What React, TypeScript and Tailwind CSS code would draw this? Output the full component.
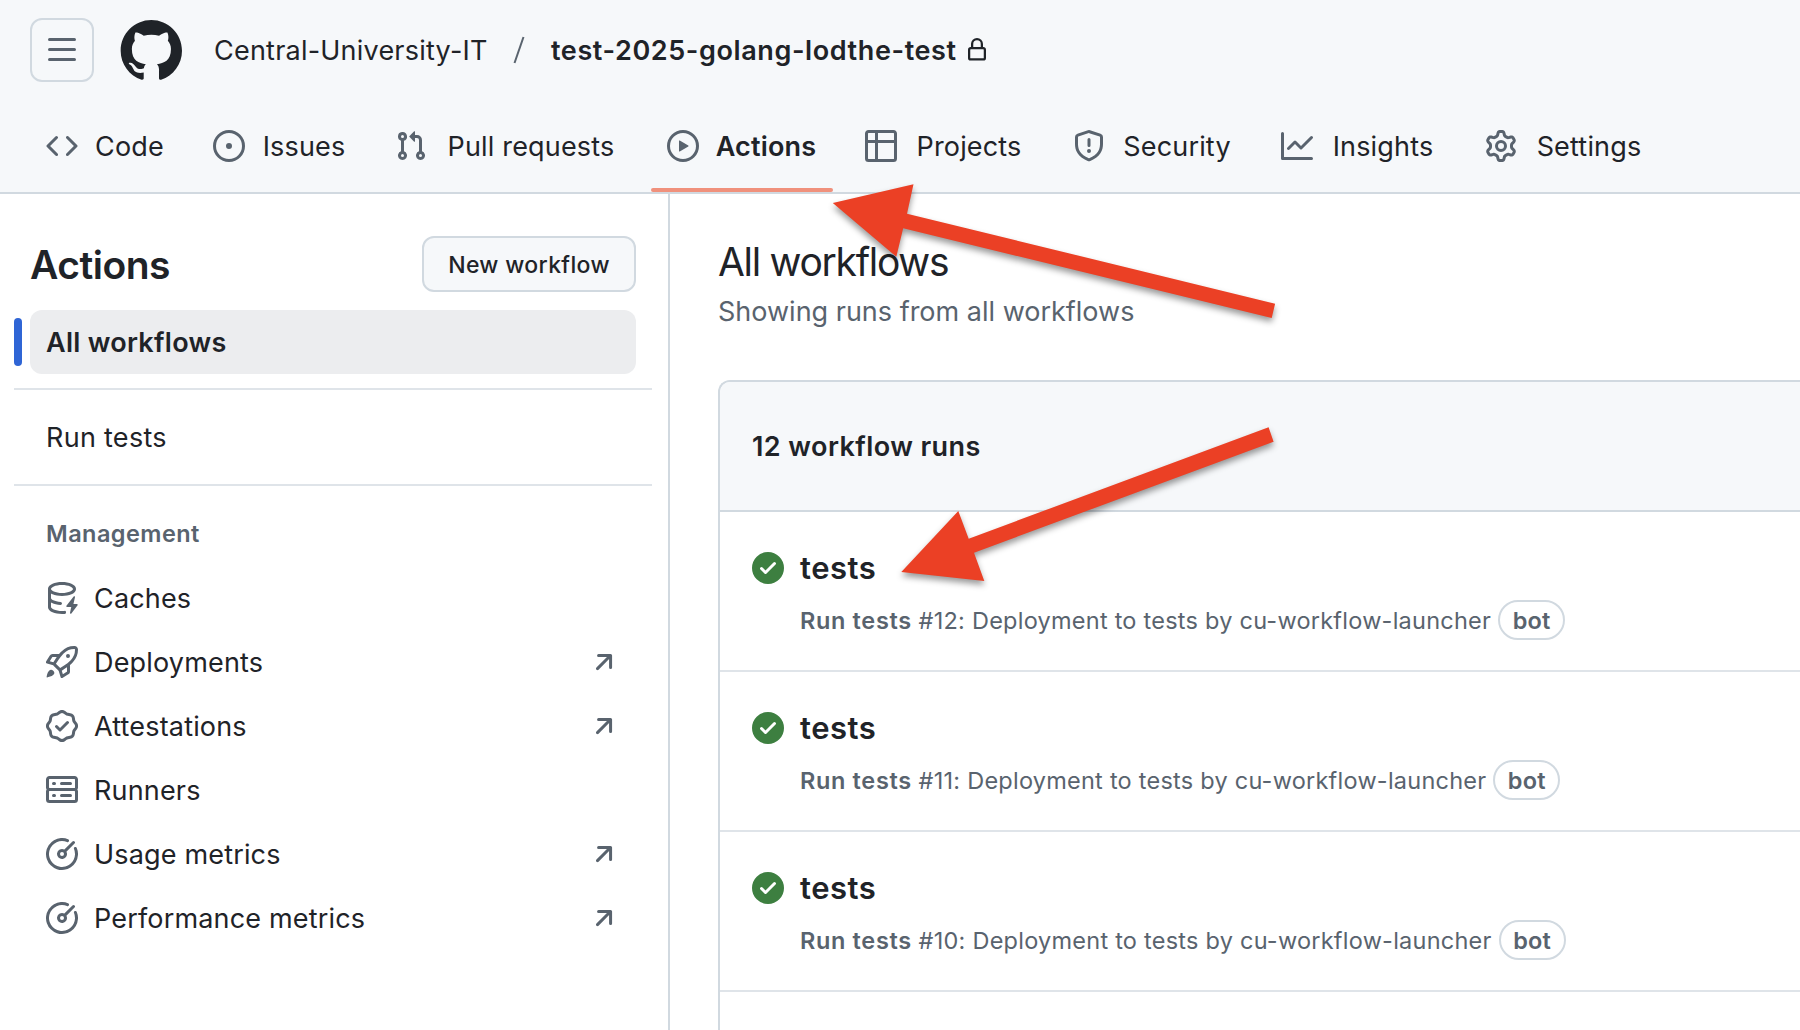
import React from "react";

const ICONS = {
  bars: "M1 2.75A.75.75 0 0 1 1.75 2h12.5a.75.75 0 0 1 0 1.5H1.75A.75.75 0 0 1 1 2.75Zm0 5A.75.75 0 0 1 1.75 7h12.5a.75.75 0 0 1 0 1.5H1.75A.75.75 0 0 1 1 7.75ZM1.75 12h12.5a.75.75 0 0 1 0 1.5H1.75a.75.75 0 0 1 0-1.5Z",
  lock: "M4 4a4 4 0 0 1 8 0v2h.25c.966 0 1.75.784 1.75 1.75v5.5A1.75 1.75 0 0 1 12.25 15h-8.5A1.75 1.75 0 0 1 2 13.25v-5.5C2 6.784 2.784 6 3.75 6H4Zm8.25 3.5h-8.5a.25.25 0 0 0-.25.25v5.5c0 .138.112.25.25.25h8.5a.25.25 0 0 0 .25-.25v-5.5a.25.25 0 0 0-.25-.25ZM10.5 6V4a2.5 2.5 0 1 0-5 0v2Z",
  code: "m11.28 3.22 4.25 4.25a.75.75 0 0 1 0 1.06l-4.25 4.25a.749.749 0 0 1-1.275-.326.749.749 0 0 1 .215-.734L13.94 8l-3.72-3.72a.749.749 0 0 1 .326-1.275.749.749 0 0 1 .734.215Zm-6.56 0a.751.751 0 0 1 1.042.018.751.751 0 0 1 .018 1.042L2.06 8l3.72 3.72a.749.749 0 0 1-.326 1.275.749.749 0 0 1-.734-.215L.47 8.53a.75.75 0 0 1 0-1.06Z",
  issue: "M8 9.5a1.5 1.5 0 1 0 0-3 1.5 1.5 0 0 0 0 3ZM8 0a8 8 0 1 1 0 16A8 8 0 0 1 8 0ZM1.5 8a6.5 6.5 0 1 0 13 0 6.5 6.5 0 0 0-13 0Z",
  pull: "M1.5 3.25a2.25 2.25 0 1 1 3 2.122v5.256a2.251 2.251 0 1 1-1.5 0V5.372A2.25 2.25 0 0 1 1.5 3.25Zm5.677-.177L9.573.677A.25.25 0 0 1 10 .854V2.5h1A2.5 2.5 0 0 1 13.5 5v5.628a2.251 2.251 0 1 1-1.5 0V5a1 1 0 0 0-1-1h-1v1.646a.25.25 0 0 1-.427.177L7.177 3.427a.25.25 0 0 1 0-.354ZM3.75 2.5a.75.75 0 1 0 0 1.5.75.75 0 0 0 0-1.5Zm0 9.5a.75.75 0 1 0 0 1.5.75.75 0 0 0 0-1.5Zm8.25.75a.75.75 0 1 0 1.5 0 .75.75 0 0 0-1.5 0Z",
  play: "M8 0a8 8 0 1 1 0 16A8 8 0 0 1 8 0ZM1.5 8a6.5 6.5 0 1 0 13 0 6.5 6.5 0 0 0-13 0Zm4.879-2.773 4.264 2.559a.25.25 0 0 1 0 .428l-4.264 2.559A.25.25 0 0 1 6 10.559V5.442a.25.25 0 0 1 .379-.215Z",
  table: "M0 1.75C0 .784.784 0 1.75 0h12.5C15.216 0 16 .784 16 1.75v12.5A1.75 1.75 0 0 1 14.25 16H1.75A1.75 1.75 0 0 1 0 14.25ZM6.5 6.5v8h7.75a.25.25 0 0 0 .25-.25V6.5Zm8-1.5V1.75a.25.25 0 0 0-.25-.25H6.5V5Zm-13 1.5v7.75c0 .138.112.25.25.25H5v-8ZM5 5V1.5H1.75a.25.25 0 0 0-.25.25V5Z",
  shield: "M7.467.133a1.748 1.748 0 0 1 1.066 0l5.25 1.68A1.75 1.75 0 0 1 15 3.48V7c0 1.566-.32 3.182-1.303 4.682-.983 1.498-2.585 2.813-5.032 3.855a1.697 1.697 0 0 1-1.33 0c-2.447-1.042-4.049-2.357-5.032-3.855C1.32 10.182 1 8.566 1 7V3.48a1.75 1.75 0 0 1 1.217-1.667Zm.61 1.429a.25.25 0 0 0-.153 0l-5.25 1.68a.25.25 0 0 0-.174.238V7c0 1.358.275 2.666 1.057 3.86.784 1.194 2.121 2.34 4.366 3.297a.196.196 0 0 0 .154 0c2.245-.956 3.582-2.104 4.366-3.298C13.225 9.666 13.5 8.36 13.5 7V3.48a.251.251 0 0 0-.174-.237l-5.25-1.68ZM8.75 4.75v3a.75.75 0 0 1-1.5 0v-3a.75.75 0 0 1 1.5 0ZM9 10.5a1 1 0 1 1-2 0 1 1 0 0 1 2 0Z",
  graph: "M1.5 1.75V13.5h13.75a.75.75 0 0 1 0 1.5H.75a.75.75 0 0 1-.75-.75V1.75a.75.75 0 0 1 1.5 0Zm14.28 2.53-5.25 5.25a.75.75 0 0 1-1.06 0L7 7.06 4.28 9.78a.751.751 0 0 1-1.042-.018.751.751 0 0 1-.018-1.042l3.25-3.25a.75.75 0 0 1 1.06 0L10 7.94l4.72-4.72a.751.751 0 0 1 1.042.018.751.751 0 0 1 .018 1.042Z",
  gear: "M8 0a8.2 8.2 0 0 1 .701.031C9.444.095 9.99.645 10.16 1.29l.288 1.107c.018.066.079.158.212.224.231.114.454.243.668.386.123.082.233.09.299.071l1.103-.303c.644-.176 1.392.021 1.82.63.27.385.506.792.704 1.218.315.675.111 1.422-.364 1.891l-.814.806c-.049.048-.098.147-.088.294.016.257.016.515 0 .772-.01.147.038.246.088.294l.814.806c.475.469.679 1.216.364 1.891a7.977 7.977 0 0 1-.704 1.217c-.428.61-1.176.807-1.82.63l-1.102-.302c-.067-.019-.177-.011-.3.071a5.909 5.909 0 0 1-.668.386c-.133.066-.194.158-.211.224l-.29 1.106c-.168.646-.715 1.196-1.458 1.26a8.006 8.006 0 0 1-1.402 0c-.743-.064-1.289-.614-1.458-1.26l-.289-1.106c-.018-.066-.079-.158-.212-.224a5.738 5.738 0 0 1-.668-.386c-.123-.082-.233-.09-.299-.071l-1.103.303c-.644.176-1.392-.021-1.82-.63a8.12 8.12 0 0 1-.704-1.218c-.315-.675-.111-1.422.363-1.891l.815-.806c.05-.048.098-.147.088-.294a6.214 6.214 0 0 1 0-.772c.01-.147-.038-.246-.088-.294l-.815-.806C.635 6.045.431 5.298.746 4.623a7.92 7.92 0 0 1 .704-1.217c.428-.61 1.176-.807 1.82-.63l1.102.302c.067.019.177.011.3-.071.214-.143.437-.272.668-.386.133-.066.194-.158.211-.224l.29-1.106C6.009.645 6.556.095 7.299.03 7.53.01 7.764 0 8 0Zm-.571 1.525c-.036.003-.108.036-.137.146l-.289 1.105c-.147.561-.549.967-.998 1.189-.173.086-.34.183-.5.29-.417.278-.97.423-1.529.27l-1.103-.303c-.109-.03-.175.016-.195.045-.22.312-.412.644-.573.99-.014.031-.021.11.059.19l.815.806c.411.406.562.957.53 1.456a4.709 4.709 0 0 0 0 .582c.032.499-.119 1.05-.53 1.456l-.815.806c-.081.08-.073.159-.059.19.162.346.353.677.573.989.02.03.085.076.195.046l1.102-.303c.56-.153 1.113-.008 1.53.27.161.107.328.204.501.29.447.222.85.629.997 1.189l.289 1.105c.029.109.101.143.137.146a6.6 6.6 0 0 0 1.142 0c.036-.003.108-.036.137-.146l.289-1.105c.147-.561.549-.967.998-1.189.173-.086.34-.183.5-.29.417-.278.97-.423 1.529-.27l1.103.303c.109.029.175-.016.195-.045.22-.313.411-.644.573-.99.014-.031.021-.11-.059-.19l-.815-.806c-.411-.406-.562-.957-.53-1.456a4.709 4.709 0 0 0 0-.582c-.032-.499.119-1.05.53-1.456l.815-.806c.081-.08.073-.159.059-.19a6.464 6.464 0 0 0-.573-.989c-.02-.03-.085-.076-.195-.046l-1.102.303c-.56.153-1.113.008-1.53-.27a4.44 4.44 0 0 0-.501-.29c-.447-.222-.85-.629-.997-1.189l-.289-1.105c-.029-.11-.101-.143-.137-.146a6.6 6.6 0 0 0-1.142 0ZM11 8a3 3 0 1 1-6 0 3 3 0 0 1 6 0ZM9.5 8a1.5 1.5 0 1 0-3.001.001A1.5 1.5 0 0 0 9.5 8Z",
  cache: "M2.5 5.724V8c0 .248.238.7 1.169 1.159.874.43 2.144.745 3.62.822a.75.75 0 1 1-.078 1.498c-1.622-.085-3.102-.432-4.204-.975a5.565 5.565 0 0 1-.507-.28V12.5c0 .133.058.318.282.551.227.237.591.483 1.101.707 1.015.447 2.47.742 4.117.742.406 0 .802-.018 1.183-.052a.751.751 0 1 1 .134 1.494C8.89 15.98 8.45 16 8 16c-1.805 0-3.475-.32-4.721-.869-.623-.274-1.173-.619-1.579-1.041-.408-.425-.7-.964-.7-1.59v-9c0-.626.292-1.165.7-1.591.406-.42.956-.766 1.579-1.04C4.525.32 6.195 0 8 0c1.806 0 3.476.32 4.721.869.623.274 1.173.619 1.579 1.041.408.425.7.964.7 1.59 0 .626-.292 1.165-.7 1.591-.406.42-.956.766-1.578 1.04C11.475 6.68 9.805 7 8 7c-1.805 0-3.475-.32-4.721-.869a6.15 6.15 0 0 1-.779-.407Zm0-2.224c0 .133.058.318.282.551.227.237.591.483 1.101.707C4.898 5.205 6.353 5.5 8 5.5c1.646 0 3.101-.295 4.118-.742.508-.224.873-.471 1.1-.708.224-.232.282-.417.282-.55 0-.133-.058-.318-.282-.551-.227-.237-.591-.483-1.101-.707C11.102 1.795 9.647 1.5 8 1.5c-1.646 0-3.101.295-4.118.742-.508.224-.873.471-1.1.708-.224.232-.282.417-.282.55ZM14.49 7.582a.375.375 0 0 0-.66-.313l-3.625 4.625a.375.375 0 0 0 .295.606h2.127l-.619 2.922a.375.375 0 0 0 .666.304l3.125-4.125A.375.375 0 0 0 15.5 11h-1.778l.769-3.418Z",
  rocket: "M14.064 0h.186C15.216 0 16 .784 16 1.75v.186a8.752 8.752 0 0 1-2.564 6.186l-.458.459c-.314.314-.641.616-.979.904v3.207c0 .608-.315 1.172-.833 1.49l-2.774 1.707a.749.749 0 0 1-1.11-.418l-.954-3.102a1.214 1.214 0 0 1-.145-.125L3.754 9.816a1.218 1.218 0 0 1-.124-.145L.528 8.717a.749.749 0 0 1-.418-1.11l1.71-2.774A1.748 1.748 0 0 1 3.31 4h3.204c.288-.338.59-.665.904-.979l.459-.458A8.749 8.749 0 0 1 14.064 0ZM8.938 3.623h-.002l-.458.458c-.76.76-1.437 1.598-2.02 2.5l-1.5 2.317 2.143 2.143 2.317-1.5c.902-.583 1.74-1.26 2.499-2.02l.459-.458a7.25 7.25 0 0 0 2.123-5.127V1.75a.25.25 0 0 0-.25-.25h-.186a7.249 7.249 0 0 0-5.125 2.123ZM3.56 14.56c-.732.732-2.334 1.045-3.005 1.148a.234.234 0 0 1-.201-.064.234.234 0 0 1-.064-.201c.103-.671.416-2.273 1.15-3.003a1.502 1.502 0 1 1 2.12 2.12Zm6.94-3.935c-.088.06-.177.118-.266.175l-2.35 1.521.548 1.783 1.949-1.2a.25.25 0 0 0 .119-.213ZM3.678 8.116 5.2 5.766c.058-.09.117-.178.176-.266H3.309a.25.25 0 0 0-.213.119l-1.2 1.95ZM12 5a1 1 0 1 1-2 0 1 1 0 0 1 2 0Z",
  verified: "m9.585.52.929.68c.153.112.331.186.518.215l1.138.175a2.678 2.678 0 0 1 2.24 2.24l.174 1.139c.029.187.103.365.215.518l.68.928a2.677 2.677 0 0 1 0 3.17l-.68.928a1.174 1.174 0 0 0-.215.518l-.175 1.138a2.678 2.678 0 0 1-2.241 2.241l-1.138.175a1.17 1.17 0 0 0-.518.215l-.928.68a2.677 2.677 0 0 1-3.17 0l-.928-.68a1.174 1.174 0 0 0-.518-.215L3.83 14.41a2.678 2.678 0 0 1-2.24-2.24l-.175-1.138a1.17 1.17 0 0 0-.215-.518l-.68-.928a2.677 2.677 0 0 1 0-3.17l.68-.928c.112-.153.186-.331.215-.518l.175-1.14a2.678 2.678 0 0 1 2.24-2.24l1.139-.175c.187-.029.365-.103.518-.215l.928-.68a2.677 2.677 0 0 1 3.17 0ZM7.303 1.728l-.927.68a2.67 2.67 0 0 1-1.18.489l-1.137.174a1.179 1.179 0 0 0-.987.987l-.174 1.136a2.677 2.677 0 0 1-.489 1.18l-.68.928a1.18 1.18 0 0 0 0 1.394l.68.927c.256.348.424.753.489 1.18l.174 1.137c.078.509.478.909.987.987l1.136.174a2.67 2.67 0 0 1 1.18.489l.928.68c.414.305.979.305 1.394 0l.927-.68a2.67 2.67 0 0 1 1.18-.489l1.137-.174a1.18 1.18 0 0 0 .987-.987l.174-1.136a2.67 2.67 0 0 1 .489-1.18l.68-.928a1.176 1.176 0 0 0 0-1.394l-.68-.927a2.686 2.686 0 0 1-.489-1.18l-.174-1.137a1.179 1.179 0 0 0-.987-.987l-1.136-.174a2.677 2.677 0 0 1-1.18-.489l-.928-.68a1.176 1.176 0 0 0-1.394 0ZM11.28 6.78l-3.75 3.75a.75.75 0 0 1-1.06 0L4.72 8.78a.751.751 0 0 1 .018-1.042.751.751 0 0 1 1.042-.018L7 8.94l3.22-3.22a.751.751 0 0 1 1.042.018.751.751 0 0 1 .018 1.042Z",
  server: "M1.75 1h12.5c.966 0 1.75.784 1.75 1.75v4c0 .372-.116.717-.314 1 .198.283.314.628.314 1v4a1.75 1.75 0 0 1-1.75 1.75H1.75A1.75 1.75 0 0 1 0 12.75v-4c0-.358.109-.707.314-1a1.739 1.739 0 0 1-.314-1v-4C0 1.784.784 1 1.75 1ZM1.5 2.75v4c0 .138.112.25.25.25h12.5a.25.25 0 0 0 .25-.25v-4a.25.25 0 0 0-.25-.25H1.75a.25.25 0 0 0-.25.25Zm.25 5.75a.25.25 0 0 0-.25.25v4c0 .138.112.25.25.25h12.5a.25.25 0 0 0 .25-.25v-4a.25.25 0 0 0-.25-.25ZM7 4.75A.75.75 0 0 1 7.75 4h4.5a.75.75 0 0 1 0 1.5h-4.5A.75.75 0 0 1 7 4.75ZM7.75 10h4.5a.75.75 0 0 1 0 1.5h-4.5a.75.75 0 0 1 0-1.5ZM3 4.75A.75.75 0 0 1 3.75 4h.5a.75.75 0 0 1 0 1.5h-.5A.75.75 0 0 1 3 4.75ZM3.75 10h.5a.75.75 0 0 1 0 1.5h-.5a.75.75 0 0 1 0-1.5Z",
  meter: "M8 1.5a6.5 6.5 0 1 0 6.016 4.035.75.75 0 0 1 1.388-.57 8 8 0 1 1-4.37-4.37.75.75 0 0 1-.569 1.389A6.473 6.473 0 0 0 8 1.5Zm6.28.22a.75.75 0 0 1 0 1.06l-4.063 4.064a2.5 2.5 0 1 1-1.06-1.06L13.22 1.72a.75.75 0 0 1 1.06 0ZM7 8a1 1 0 1 0 2 0 1 1 0 0 0-2 0Z",
  arrow: "M4.53 4.75A.75.75 0 0 1 5.28 4h6.01a.75.75 0 0 1 .75.75v6.01a.75.75 0 0 1-1.5 0v-4.2l-5.26 5.261a.749.749 0 0 1-1.275-.326.749.749 0 0 1 .215-.734L9.48 5.5h-4.2a.75.75 0 0 1-.75-.75Z",
  check: "M8 16A8 8 0 1 1 8 0a8 8 0 0 1 0 16Zm3.78-9.72a.751.751 0 0 0-.018-1.042.751.751 0 0 0-1.042-.018L6.75 9.19 5.28 7.72a.751.751 0 0 0-1.042.018.751.751 0 0 0-.018 1.042l2 2a.75.75 0 0 0 1.06 0Z",
};

const LOGO =
  "M12.5.75C6.146.75 1 5.896 1 12.25c0 5.089 3.292 9.387 7.863 10.91.575.101.79-.244.79-.546 0-.273-.014-1.178-.014-2.142-2.889.532-3.636-.704-3.866-1.35-.13-.331-.69-1.352-1.18-1.625-.402-.216-.977-.748-.014-.762.906-.014 1.553.834 1.769 1.179 1.035 1.74 2.688 1.25 3.349.948.1-.747.402-1.25.733-1.538-2.559-.287-5.232-1.279-5.232-5.678 0-1.25.445-2.285 1.178-3.09-.115-.288-.517-1.467.115-3.048 0 0 .963-.302 3.163 1.179.92-.259 1.897-.388 2.875-.388.977 0 1.955.13 2.875.388 2.2-1.495 3.162-1.179 3.162-1.179.633 1.581.23 2.76.115 3.048.733.805 1.179 1.825 1.179 3.09 0 4.413-2.688 5.39-5.247 5.678.417.36.776 1.05.776 2.128 0 1.538-.014 2.774-.014 3.162 0 .302.216.662.79.547C20.709 21.637 24 17.324 24 12.25 24 5.896 18.854.75 12.5.75Z";

type IconName = keyof typeof ICONS;

function Icon({ name, className = "size-8 text-[#59636e]" }: { name: IconName; className?: string }) {
  return (
    <svg viewBox="0 0 16 16" fill="currentColor" className={`shrink-0 ${className}`} aria-hidden="true">
      <path d={ICONS[name]} />
    </svg>
  );
}

const TABS: { icon: IconName; label: string; width: string; active?: boolean }[] = [
  { icon: "code", label: "Code", width: "w-[71px]" },
  { icon: "issue", label: "Issues", width: "w-[86px]" },
  { icon: "pull", label: "Pull requests", width: "w-[176px]" },
  { icon: "play", label: "Actions", width: "w-[102px]", active: true },
  { icon: "table", label: "Projects", width: "w-[112px]" },
  { icon: "shield", label: "Security", width: "w-[112px]" },
  { icon: "graph", label: "Insights", width: "w-[108px]" },
  { icon: "gear", label: "Settings", width: "w-[112px]" },
];

const MANAGEMENT: { icon: IconName; label: string; external?: boolean }[] = [
  { icon: "cache", label: "Caches" },
  { icon: "rocket", label: "Deployments", external: true },
  { icon: "verified", label: "Attestations", external: true },
  { icon: "server", label: "Runners" },
  { icon: "meter", label: "Usage metrics", external: true },
  { icon: "meter", label: "Performance metrics", external: true },
];

const RUNS = [12, 11, 10];

function Header() {
  return (
    <header className="h-[194px] border-b-2 border-[#d1d9e0] bg-[#f6f8fa]">
      <div className="flex h-[100px] items-center pl-[30px]">
        <button className="flex size-16 items-center justify-center rounded-xl border-2 border-[#d1d9e0]">
          <Icon name="bars" />
        </button>
        <svg viewBox="0 0 24 24" fill="currentColor" className="ml-6 size-16 shrink-0" aria-hidden="true">
          <path d={LOGO} />
        </svg>
        <span className="ml-8 w-[274px] whitespace-nowrap pt-px tracking-[0.22px]">Central-University-IT</span>
        <svg viewBox="0 0 12 28" className="ml-[25px] h-7 w-3 text-[#59636e]" aria-hidden="true">
          <path d="M10.5 1 1.5 27" stroke="currentColor" strokeWidth="2" />
        </svg>
        <span className="ml-[26px] w-[414px] whitespace-nowrap pt-px font-semibold tracking-[0.6px]">
          test-2025-golang-lodthe-test
        </span>
        <Icon name="lock" className="size-6" />
      </div>
      <nav className="flex h-[92px] gap-4 pl-[30px]">
        {TABS.map((tab) => (
          <a key={tab.label} className="relative flex items-center gap-4 px-4">
            <Icon name={tab.icon} />
            <span
              className={`flex justify-center whitespace-nowrap pt-px ${tab.width} ${tab.active ? "font-semibold" : ""}`}
            >
              {tab.label}
            </span>
            {tab.active && <span className="absolute inset-x-0 bottom-0 h-1 rounded-sm bg-[#f0917c]" />}
          </a>
        ))}
      </nav>
    </header>
  );
}

function Sidebar() {
  return (
    <aside className="w-[670px] shrink-0 border-r-2 border-[#d1d9e0] pl-[14px] pr-4 pt-[42px]">
      <div className="flex items-center justify-between pl-4 pr-4">
        <h2 className="text-[39px] leading-[55px] font-semibold tracking-[-0.5px] pt-px">Actions</h2>
        <button className="h-14 w-[214px] whitespace-nowrap rounded-xl border-2 border-[#d1d9e0] bg-[#f6f8fa] pt-px text-[23px] font-medium tracking-[0.35px]">
          New workflow
        </button>
      </div>
      <div className="mt-[18px] flex items-center gap-2 pr-4">
        <span className="h-12 w-2 rounded bg-[#2f65d5]" />
        <a className="flex h-16 grow items-center rounded-xl bg-[#ecedef] pl-4 pt-px font-semibold tracking-[0.28px]">
          All workflows
        </a>
      </div>
      <div className="mt-[14px] flex h-[98px] items-center border-y-2 border-[#dfe4e9] pl-8 pt-px tracking-[0.28px]">
        Run tests
      </div>
      <h3 className="mt-[30px] pl-8 text-[23.5px] leading-9 font-semibold tracking-[0.45px] text-[#59636e]">
        Management
      </h3>
      <ul className="mt-[14px]">
        {MANAGEMENT.map((item) => (
          <li key={item.label} className="flex h-16 items-center gap-4 pl-8 pr-8">
            <Icon name={item.icon} />
            <span className="grow pt-px">{item.label}</span>
            {item.external && <Icon name="arrow" />}
          </li>
        ))}
      </ul>
    </aside>
  );
}

function RunRow({ number }: { number: number }) {
  return (
    <li className="flex h-40 gap-4 border-b-2 border-[#dfe4e9] pl-8 pt-10">
      <Icon name="check" className="size-8 text-[#3d7f40]" />
      <div className="text-[23.5px] text-[#59636e]">
        <h4 className="text-[31px] leading-8 font-semibold tracking-[0.5px] text-[#1f2328]">tests</h4>
        <p className="mt-4 flex h-10 items-center whitespace-nowrap tracking-[0.24px]">
          <span className="pt-px">
            <b className="font-semibold tracking-[0.65px]">Run tests</b> #{number}: Deployment to tests by
            cu-workflow-launcher
          </span>
          <span className="ml-[7px] flex h-10 w-[67px] items-center justify-center rounded-full border-2 border-[#d1d9e0] pt-px font-semibold">
            bot
          </span>
        </p>
      </div>
    </li>
  );
}

function Arrows() {
  return (
    <svg
      viewBox="0 0 1800 1030"
      className="pointer-events-none absolute left-0 top-0 h-[1030px] w-[1800px] drop-shadow-[0_4px_3px_rgba(0,0,0,0.4)]"
      fill="#eb4025"
      aria-hidden="true"
    >
      <path d="M832.8 203 913.5 184.3 907 213.7 1275.1 303.7 1271.7 318 903.2 228.3 896.3 256.7Z" />
      <path d="M901.3 572 958.3 511 968.7 538.7 1268.6 427.3 1273.6 441.7 974 552.7 984.3 581Z" />
    </svg>
  );
}

export default function App() {
  return (
    <div className="relative flex h-[1030px] w-[1800px] flex-col overflow-hidden bg-white font-[Inter,sans-serif] text-[27px] leading-9 tracking-[0.17px] text-[#1f2328]">
      <Header />
      <div className="flex min-h-0 grow">
        <Sidebar />
        <main className="min-w-0 grow pl-12 pt-[42px]">
          <h1 className="text-[39px] leading-[51px] tracking-[-1.3px]">All workflows</h1>
          <p className="leading-[49px] tracking-normal text-[#59636e]">Showing runs from all workflows</p>
          <section className="mt-11 h-[700px] rounded-tl-xl border-2 border-r-0 border-[#d1d9e0]">
            <div className="flex h-[130px] items-center rounded-tl-[10px] border-b-2 border-[#d1d9e0] bg-[#f6f8fa] pl-8 pt-px font-semibold tracking-[0.43px]">
              12 workflow runs
            </div>
            <ul>
              {RUNS.map((n) => (
                <RunRow key={n} number={n} />
              ))}
            </ul>
          </section>
        </main>
      </div>
      <Arrows />
    </div>
  );
}
